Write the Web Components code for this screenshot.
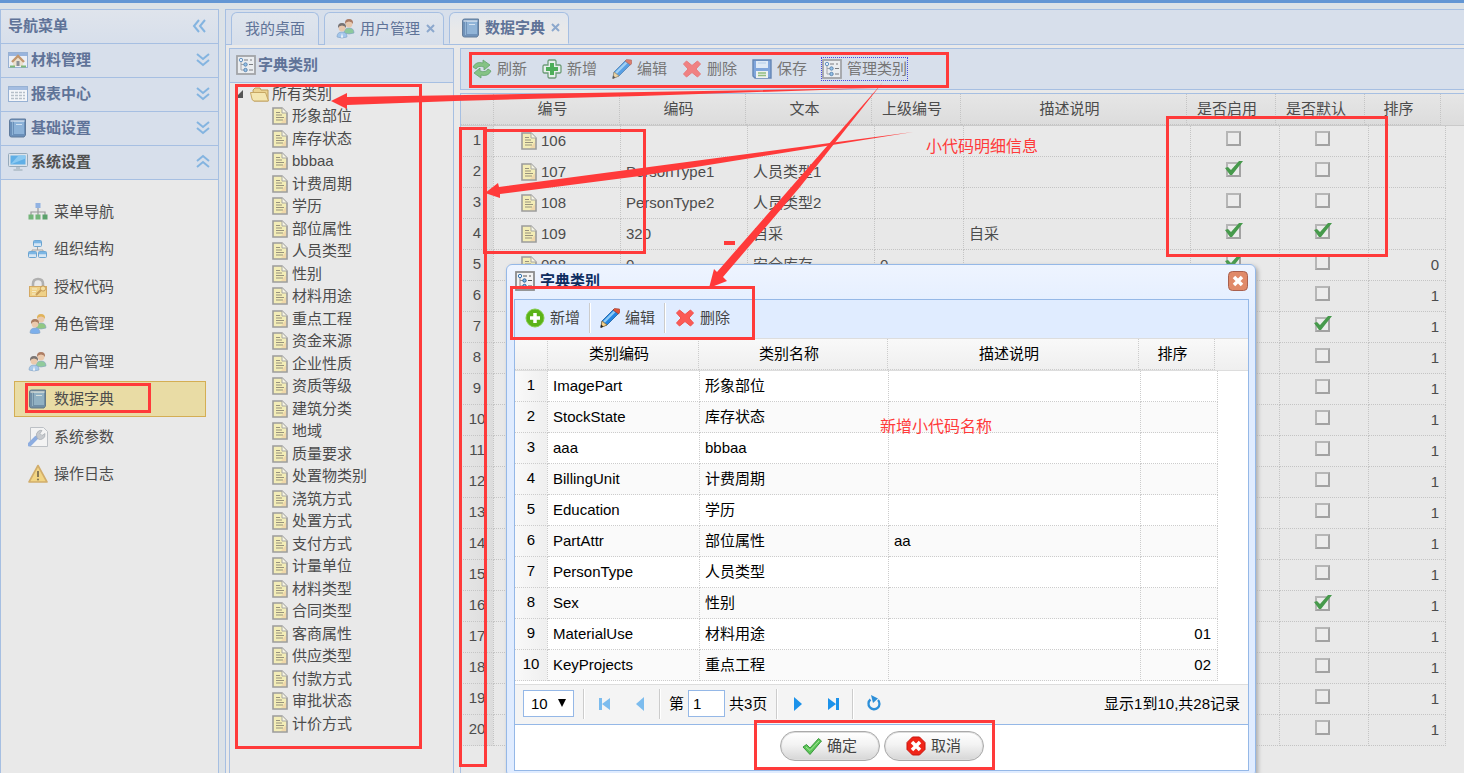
<!DOCTYPE html>
<html lang="zh-CN">
<head>
<meta charset="utf-8">
<title>数据字典</title>
<style>
html,body{height:100%;margin:0}
body{overflow:hidden;background:#dce2e7;font:15px/20px "Liberation Sans","Noto Sans CJK SC",sans-serif;color:#4c4c4c;
 --line:#a6bfe2;--head:#d7dfeb;--page:#e9e9e9;--red:#ff3a3a}
</style>
</head>
<body>
<app-shell></app-shell>
<script>
const esc = s => s == null ? '' : String(s);
class Base extends HTMLElement {
  constructor(){ super(); this.attachShadow({mode:'open'}); }
  connectedCallback(){ this.paint(); }
  paint(){ this.shadowRoot.innerHTML = `<style>*{box-sizing:border-box}${this.css()}</style>${this.html()}`; }
}

/* ---------- icons, on a 20 x 20 board unless BOARDS says otherwise ---------- */
const person = (x,y,hair,shirt) => `<path d="M${x-5} ${y+10}q0-5 5-5t5 5q-5 2-10 0z" fill="${shirt}" stroke="#5b87b5" stroke-width=".6"/><circle cx="${x}" cy="${y+1}" r="3.4" fill="#edbd95"/><path d="M${x-4} ${y+1}q-.5-5 4-5t4 5q-1-2.500-4-2.500t-4 2.500z" fill="${hair}"/>`;
const BOARDS = {doc:'0 0 16 18'};
const ICONS = {
  home:`<rect x="0.500" y="2.500" width="19" height="15" fill="#f4f7fb" stroke="#7d9ec9"/><rect x="1" y="3" width="18" height="3" fill="#7ea3d8"/><path d="M5 11v5h10v-5l-5-4z" fill="#f4e3c3"/><path d="M4 12l6-6 6 6" fill="none" stroke="#b9783a" stroke-width="2.400"/><rect x="8.500" y="11" width="3" height="5" fill="#6a6f76"/><path d="M2 16.500h5M13 16.500h5" stroke="#59a848" stroke-width="2"/>`,
  sheet:`<rect x=".5" y="2.500" width="19" height="15" fill="#fff" stroke="#7d9ec9"/><rect x="1" y="3" width="18" height="3" fill="#8fb0dd"/><path d="M3 8.500h14M3 11.500h14M3 14.500h14" stroke="#a9b2bc" stroke-width="1.500" stroke-dasharray="3 1"/>`,
  book:`<path d="M3.500 1h14v16l-1.500 2H3.500Q1.500 19 1.500 17V3Q1.500 1 3.500 1z" fill="#3d6ea5" stroke="#2e527c"/><path d="M6 3h10v13H6z" fill="#6d9fd0"/><path d="M2.500 3h14" stroke="#e6eef7" stroke-width="1.200"/><path d="M4.500 4v13" stroke="#6f9fcc"/><path d="M8 6.500h6" stroke="#cfe2f5"/>`,
  monitor:`<rect x=".5" y="1.500" width="19" height="13" rx="1" fill="#dfe6ea" stroke="#7b95a8"/><rect x="2.500" y="3.500" width="15" height="9" fill="#2f9be4"/><path d="M2.500 12.500l8-9h7v3z" fill="#6cc0f4"/><path d="M8 15h4v2h2.500v2h-9v-2H8z" fill="#a9b8c2"/>`,
  menu:`<path d="M10 5v5M3 13v-3h14v3M10 10v3" fill="none" stroke="#777" stroke-width="1.200"/><rect x="7.500" y="1" width="5" height="5" fill="#6c9be0"/><rect x=".5" y="12.500" width="5" height="5" fill="#42a04a"/><rect x="7.500" y="12.500" width="5" height="5" fill="#42a04a"/><rect x="14.500" y="12.500" width="5" height="5" fill="#1f8436"/>`,
  org:`<path d="M9.500 7v4M4 13v-2h11v2" fill="none" stroke="#888"/><g fill="#cfe5f8" stroke="#3787c6"><rect x="5.500" y="1.500" width="8" height="6" rx="1"/><rect x=".5" y="12.500" width="8" height="6" rx="1"/><rect x="10.500" y="12.500" width="8" height="6" rx="1"/></g><path d="M6 3h7M1 14h7M11 14h7" stroke="#4da1e2" stroke-width="2.500"/>`,
  lock:`<path d="M5 10V7q0-5 5-5t5 5v3" fill="none" stroke="#999" stroke-width="2.600"/><rect x="1.500" y="9.500" width="17" height="10" fill="#f2c860" stroke="#cc8f2c"/><path d="M4 12h5M4 14.500h4M4 17h5" stroke="#fbeebd"/><path d="M8 18l6-6" stroke="#b97d1e" stroke-width="2"/><circle cx="15" cy="11.500" r="2.600" fill="#fbdc82" stroke="#b97d1e"/>`,
  roles: person(13,4,'#dd9d1f','#6dbb58')+person(7,9,'#8f4f25','#4f97ec'),
  users: person(13,4,'#95512d','#6dbf7c')+person(6,8,'#4c4340','#8dbcec')+`<path d="M6 14l1 4-1 1-1-1z" fill="#fff"/>`,
  wrench:`<path d="M2.500 .5h13l4 4v15h-17z" fill="#f8f8f8" stroke="#aab0b6"/><path d="M1.500 17.500l7-7" stroke="#6794dd" stroke-width="4" stroke-linecap="round"/><path d="M9 10.500q-2-4 1.500-6.500 1.500-1 3.500-.5l-2 3 2 2 3-2q.5 4-2.500 5.500-2.500 1-4 .2z" fill="#b9bec4" stroke="#8b9299" stroke-width=".7"/>`,
  warn:`<path d="M10 1.500L19 18H1z" fill="#f6cd5a" stroke="#c89436" stroke-width="1.600" stroke-linejoin="round"/><path d="M10 7v6" stroke="#614b18" stroke-width="2"/><circle cx="10" cy="15.500" r="1.100" fill="#614b18"/>`,
  category:`<rect x="1" y="1" width="18" height="18" fill="#f3f3f3" stroke="#8c8c8c" stroke-width="1.800"/><path d="M5 5v10h4M5 9.500h4" fill="none" stroke="#8b8b8b"/><path d="M8 5h4M13 9.500h4M13 15h4M14 5h2" stroke="#555"/><circle cx="5" cy="5" r="1.700" fill="#eaf4ff" stroke="#3774b0"/><circle cx="9.500" cy="9.500" r="1.700" fill="#7ab7e8" stroke="#2d6499"/><circle cx="9.500" cy="15" r="1.700" fill="#7ab7e8" stroke="#2d6499"/>`,
  folder:`<path d="M3 6l2-2h5l1 2h7v11H4z" fill="#eccb6c" stroke="#a97d22"/><path d="M.5 8.500h15l3 8.500H4q-2 0-2.500-4z" fill="#fae69a" stroke="#b98c2c"/>`,
  doc:`<path d="M1 1h9l5 5v11H1z" fill="#f8f0a2" stroke="#7c7c7c" stroke-width="1.600"/><path d="M10 1v5h5" fill="#fdfbe0" stroke="#8d8d88"/><path d="M4 5.500h4M4 8h6M4 10.500h8M4 13h7" stroke="#776f50" stroke-width="1.200"/><path d="M9 16h5v-6z" fill="#f0bd84" opacity=".6"/>`,
  refresh:`<g fill="#63b85a" stroke="#358a3a" stroke-width=".8"><path d="M1 8q3-6 10-4V1l7 5-6 5V8q-6-2-8 2z"/><path d="M19 12q-3 6-10 4v3l-7-5 6-5v3q6 2 8-2z"/></g>`,
  add:`<path d="M7 1h6l1 1v4h4l1 1v6l-1 1h-4v4l-1 1H7l-1-1v-4H2l-1-1V7l1-1h4V2z" fill="#eff7ed" stroke="#418048" stroke-width="1.300"/><path d="M8 4h4v4h4v4h-4v4H8v-4H4V8h4z" fill="#149a1c"/>`,
  pencil:`<path d="M2 13L14 1l5 4L7 17l-6 2z" fill="#2384e2" stroke="#1c5d9d" stroke-width=".8"/><path d="M4 14L14.500 3.500" stroke="#8dcaf6" stroke-width="2.400"/><path d="M13 2l1.500-1.500 5 .5.500 3-1.500 2z" fill="#df5439" stroke="#9b3529" stroke-width=".6"/><path d="M2 13l5 4-6 2.500z" fill="#f7d28b" stroke="#8a6a34" stroke-width=".7"/><path d="M1 16.500l2.500 2L.5 20z" fill="#222"/>`,
  cross:`<path d="M4.500 2L10 6.500 15.500 2 18.500 5 14 10l4.500 5-3 3L10 13.500 4.500 18l-3-3L6 10 1.500 5z" fill="#fb5a56" stroke="#f0504c" stroke-width="1" stroke-linejoin="round"/>`,
  save:`<path d="M1 1h18v18H3l-2-2z" fill="#5c8fd6" stroke="#36619e" stroke-width="1.400"/><path d="M4 2h12v7H4z" fill="#e3f0fc"/><path d="M4 12h12v7H4z" fill="#f8faf2"/><path d="M6 14h8M6 16.500h8" stroke="#74b054" stroke-width="1.400"/><path d="M6 4h8" stroke="#a6c6ea"/>`,
  plus:`<circle cx="10" cy="10" r="9" fill="#5bb318" stroke="#84cc4a"/><path d="M10 5v10M5 10h10" stroke="#fff" stroke-width="3.500"/>`,
  ok:`<path d="M1 11l3.500-2.500L8 12 16.500 2.500 19.500 5 8 18.500z" fill="#5cc558" stroke="#2f8f31" stroke-width=".9"/><path d="M4 11l4 3.500L17 5" fill="none" stroke="#a4e795"/>`,
  stop:`<path d="M6.500 1h7L19 6.500v7L13.500 19h-7L1 13.500v-7z" fill="#f02418" stroke="#c7150d"/><path d="M6 6l8 8M14 6l-8 8" stroke="#fff" stroke-width="3.500"/>`,
  close:`<rect x=".5" y=".5" width="19" height="19" rx="4" fill="#e08a69" stroke="#a9604e"/><path d="M6 6l8 8M14 6l-8 8" stroke="#fff" stroke-width="3.500"/>`,
  down:`<path d="M4 4l6 5 6-5M4 10l6 5 6-5" fill="none" stroke="#84b4e0" stroke-width="2"/>`,
  up:`<path d="M4 9l6-5 6 5M4 15l6-5 6 5" fill="none" stroke="#84b4e0" stroke-width="2"/>`,
  left:`<path d="M9 4l-5 6 5 6M15 4l-5 6 5 6" fill="none" stroke="#84b4e0" stroke-width="2"/>`,
  first:`<path d="M4 4h3v12H4zM15 4v12L7 10z" fill="#7cbcee"/>`,
  prev:`<path d="M14 3v14L6 10z" fill="#7cbcee"/>`,
  next:`<path d="M6 3v14l8-7z" fill="#1c92ea"/>`,
  last:`<path d="M13 4h3v12h-3zM5 4v12l8-6z" fill="#1c92ea"/>`,
  reload:`<path d="M6.500 5.500a5.500 5.500 0 1 0 7.500 0.500" fill="none" stroke="#2d8fd8" stroke-width="2.300"/><path d="M7 1l7 3.500-5 4.500z" fill="#2d8fd8"/>`
};
customElements.define('ui-icon', class extends Base {
  css(){ return `:host{display:block;flex:none;width:20px;height:20px}:host([muted]){opacity:.7}svg{display:block;width:100%;height:100%}`; }
  html(){ const n=this.getAttribute('name'); return `<svg viewBox="${BOARDS[n]||'0 0 20 20'}" aria-hidden="true">${ICONS[n]}</svg>`; }
});

/* ---------- left navigation ---------- */
customElements.define('nav-section', class extends Base {
  css(){ return `:host{display:block}button{display:flex;align-items:center;gap:3px;width:100%;height:34px;padding:0 5px 2px 7px;border:0;border-bottom:1px solid var(--line);background:var(--head);font:inherit;font-weight:bold;color:#5f7398;text-align:left}
   :host([open]) button{color:#505050}span{flex:1}`; }
  html(){ return `<button aria-expanded="${this.hasAttribute('open')}"><ui-icon muted name="${this.getAttribute('icon')}"></ui-icon><span><slot></slot></span><ui-icon name="${this.hasAttribute('open')?'up':'down'}"></ui-icon></button>`; }
});
customElements.define('nav-link', class extends Base {
  css(){ return `:host{display:block}a{display:flex;align-items:center;gap:6px;height:36px;padding:0 13px;border:1px solid transparent;color:inherit;text-decoration:none}
   :host([selected]) a{background:#e9dca5;border-color:#d4ae54}`; }
  html(){ return `<a href="#"><ui-icon muted name="${this.getAttribute('icon')}"></ui-icon><slot></slot></a>`; }
});
customElements.define('nav-panel', class extends Base {
  css(){ return `:host{display:flex;flex-direction:column;width:219px;flex:none;border:1px solid var(--line);border-bottom:0;background:var(--page)}
   header{display:flex;align-items:center;height:34px;flex:none;padding:0 8px 2px 7px;border-bottom:1px solid var(--line);background:linear-gradient(#dfe4ec,var(--head));font-weight:bold;color:#5f7398}header span{flex:1}
   nav{display:flex;flex-direction:column;justify-content:space-between;height:298px;margin:14px 12px 0 13px}`; }
  html(){ const items=[['menu','菜单导航'],['org','组织结构'],['lock','授权代码'],['roles','角色管理'],['users','用户管理'],['book','数据字典'],['wrench','系统参数'],['warn','操作日志']];
   return `<header><span>导航菜单</span><ui-icon name="left"></ui-icon></header>
   <nav-section icon="home">材料管理</nav-section><nav-section icon="sheet">报表中心</nav-section><nav-section icon="book">基础设置</nav-section><nav-section icon="monitor" open>系统设置</nav-section>
   <nav>${items.map(i=>`<nav-link icon="${i[0]}" ${i[1]==='数据字典'?'selected':''}>${i[1]}</nav-link>`).join('')}</nav>`; }
});

/* ---------- tabs ---------- */
customElements.define('tab-item', class extends Base {
  css(){ return `:host{display:flex;align-items:center;height:33px;padding:0 13px;border:1px solid var(--line);border-bottom:0;border-radius:6px 6px 0 0;background:linear-gradient(#dfe5ed,var(--head));color:#5f7398}
   :host([icon]){padding:0 8px 0 11px}:host([selected]){background:linear-gradient(#e0e6ee,var(--page) 60%);font-weight:bold;height:33px;padding-bottom:1px;border-bottom:1px solid var(--page);box-sizing:content-box;height:32px}
   ui-icon{margin-right:4px}button{border:0;padding:0;margin-left:5px;background:none;width:10px;height:20px}svg{display:block}`; }
  html(){ const i=this.getAttribute('icon');
   return `${i?`<ui-icon muted name="${i}"></ui-icon>`:''}<slot></slot>${i?`<button aria-label="关闭"><svg width="10" height="20"><path d="M2 6l7 7M9 6l-7 7" stroke="#8ca8cd" stroke-width="2"/></svg></button>`:''}`; }
});
customElements.define('tab-bar', class extends Base {
  css(){ return `:host{display:flex;align-items:flex-start;gap:5px;height:35px;flex:none;padding:2px 5px 0;border-bottom:1px solid var(--line);background:var(--head)}`; }
  html(){ return `<tab-item>我的桌面</tab-item><tab-item icon="users">用户管理</tab-item><tab-item icon="book" selected>数据字典</tab-item>`; }
});

/* ---------- category tree ---------- */
customElements.define('category-tree', class extends Base {
  css(){ return `:host{display:flex;flex-direction:column;width:225px;flex:none;border:1px solid var(--line);border-bottom:0}
   header{display:flex;align-items:center;gap:2px;height:34px;flex:none;padding:0 6px 2px;border-bottom:1px solid var(--line);background:var(--head);font-weight:bold;color:#5f7398}
   ul{list-style:none;margin:0;padding:0}.root{display:flex;align-items:center;gap:2px;height:22px;padding-left:5px}.root svg{margin-right:5px}
   ul ul{display:grid;grid-auto-rows:1fr;height:630px;padding-left:42px}ul ul li{display:flex;align-items:center;gap:4px}
   li ui-icon.leaf{width:16px;height:18px}`; }
  html(){ const n='形象部位 库存状态 bbbaa 计费周期 学历 部位属性 人员类型 性别 材料用途 重点工程 资金来源 企业性质 资质等级 建筑分类 地域 质量要求 处置物类别 浇筑方式 处置方式 支付方式 计量单位 材料类型 合同类型 客商属性 供应类型 付款方式 审批状态 计价方式'.split(' ');
   return `<header><ui-icon muted name="category"></ui-icon>字典类别</header><ul role="tree"><li role="treeitem" aria-expanded="true"><div class="root"><svg width="8" height="8"><path d="M8 0v8H0z" fill="#555"/></svg><ui-icon muted name="folder"></ui-icon>所有类别</div>
   <ul role="group">${n.map(t=>`<li role="treeitem"><ui-icon class="leaf" muted name="doc"></ui-icon>${t}</li>`).join('')}</ul></li></ul>`; }
});

/* ---------- toolbars ---------- */
customElements.define('tool-button', class extends Base {
  css(){ return `:host{display:block}button{display:flex;align-items:center;gap:5px;height:22px;padding:0;border:0;background:none;font:inherit;color:inherit;white-space:nowrap}
   :host([focused]) button{outline:1px dotted #4a4ae0}`; }
  html(){ return `<button><ui-icon ${this.hasAttribute('muted')?'muted':''} name="${this.getAttribute('icon')}"></ui-icon><slot></slot></button>`; }
});
customElements.define('tool-bar', class extends Base {
  css(){ return `:host{display:flex;align-items:center;gap:15px;height:42px;flex:none;padding:0 11px;border:1px solid var(--line);border-right:0;background:var(--head);color:#767676}`; }
  html(){ return `<slot></slot>`; }
});

/* ---------- data grid: header table over body table ---------- */
const codes={cols:['编号','编码','文本','上级编号','描述说明','是否启用','是否默认','排序'],kinds:['doc','','','','','check','check','num'],
 headW:[33,126,126,126,89,226,89,89,76],bodyW:[33,127,127,127,89,227,89,89,77],
 rows:[['106','','','','',0,0,''],['107','PersonType1','人员类型1','','',1,0,''],['108','PersonType2','人员类型2','','',0,0,''],['109','320','自采','','自采',1,1,''],['098','0','安全库存','0','',1,0,'0'],
 ...Array.from({length:15},(_,i)=>['','','','','',null,(i===1||i===10)?1:0,'1'])]};
const cats={cols:['类别编码','类别名称','描述说明','排序'],kinds:['','','','num'],headW:[33,151,189,251,76],bodyW:[33,152,189,252,77],
 rows:[['ImagePart','形象部位'],['StockState','库存状态'],['aaa','bbbaa'],['BillingUnit','计费周期'],['Education','学历'],['PartAttr','部位属性','aa'],['PersonType','人员类型'],['Sex','性别'],['MaterialUse','材料用途','','01'],['KeyProjects','重点工程','','02']]};
const MODELS={codes,cats};
customElements.define('data-grid', class extends Base {
  css(){ return `:host{display:block}
   table{border-collapse:separate;border-spacing:0;table-layout:fixed;width:0}
   th,td{height:31px;padding:0 6px 0 5px;border:0 dotted var(--dot,#c4c4c4);border-width:0 1px 1px 0;white-space:nowrap;text-align:left;font-weight:normal;line-height:20px}
   td,tbody th{padding-bottom:var(--lift,1px)}
   .head{background:linear-gradient(var(--h1,#e6e6e6),var(--h2,#dcdcdc));border-bottom:1px solid var(--rule,#cacaca)}
   thead th{text-align:center;padding:0 13px 0 5px}
   tbody tr:nth-child(even){background:var(--zebra,#e8e8e8)}
   tbody th{padding:0 0 2px;text-align:center;background:linear-gradient(90deg,var(--h1,#e6e6e6),var(--h2,#dcdcdc))}
   .r{text-align:right}.c{text-align:center}.n{display:flex;align-items:center;gap:4px;padding-left:22px}.n ui-icon{width:16px;height:18px}
   .box{display:inline-block;position:relative;width:15px;height:15px;vertical-align:top;margin:0 2px 0 0}
   input{appearance:none;display:block;width:15px;height:15px;margin:0;border:2px solid #b6b6b6;border-right-color:#a2a2a2;border-bottom-color:#a2a2a2;background:#ececec}
   .box svg{position:absolute;left:-2px;top:-2px}`; }
  html(){ const m=MODELS[this.getAttribute('model')];
   const cell=(v,k,i)=> k==='check'? `<td class="c">${v==null?'':`<span class="box"><input type="checkbox" aria-label="${m.cols[i]}" ${v?'checked':''}>${v?`<svg width="20" height="16"><path d="M1 8l3-1 3 3L15 1h4L8 15H6z" fill="#479a4c"/></svg>`:''}</span>`}</td>`
     : k==='num'? `<td class="r">${esc(v)}</td>`
     : k==='doc'? `<td>${v?`<div class="n"><ui-icon muted name="doc"></ui-icon>${v}</div>`:''}</td>` : `<td>${esc(v)}</td>`;
   const cg=w=>`<colgroup>${w.map(x=>`<col style="width:${x}px">`).join('')}</colgroup>`;
   return `<div class="head"><table>${cg(m.headW)}<thead><tr><th></th>${m.cols.map(c=>`<th scope="col">${c}</th>`).join('')}</tr></thead></table></div>
   <table>${cg(m.bodyW)}<tbody>${m.rows.map((r,n)=>`<tr><th scope="row">${n+1}</th>${m.kinds.map((k,i)=>cell(r[i],k,i)).join('')}</tr>`).join('')}</tbody></table>`; }
});

/* ---------- pager ---------- */
customElements.define('pager-bar', class extends Base {
  css(){ return `:host{display:flex;align-items:center;height:40px;margin-top:3px;padding:0 8px 2px;border-top:1px solid #ddd;background:#f4f4f4}
   .size{position:relative;margin-right:9px}.size svg{position:absolute;right:8px;top:9px;pointer-events:none}
   select,input{appearance:none;height:27px;border:1px solid #95b8e7;border-radius:0;background:#fff;font:inherit;color:#000;margin:0}
   select{display:block;width:51px;padding:0 7px}input{width:37px;padding:0 4px}
   i{width:2px;height:30px;border-left:1px solid #ccc;border-right:1px solid #fff}
   button{display:block;border:0;padding:0;background:none;width:20px;height:20px}
   .g{display:flex;gap:15px;margin:0 9px 0 10px}label{display:flex;align-items:center;gap:4px;margin:0 9px 0 8px}p{margin:0 0 0 auto}`; }
  html(){ const b=(n,l)=>`<button aria-label="${l}"><ui-icon name="${n}"></ui-icon></button>`;
   return `<div class="size"><select aria-label="每页条数"><option>10</option></select><svg width="8" height="8" aria-hidden="true"><path d="M0 0h8L4 8z"/></svg></div><i></i>
   <div class="g">${b('first','首页')}${b('prev','上一页')}</div><i></i><label><span>第</span><input value="1"><span>共3页</span></label><i></i>
   <div class="g">${b('next','下一页')}${b('last','末页')}</div><i></i><div class="g">${b('reload','刷新')}</div><p>显示1到10,共28记录</p>`; }
});

/* ---------- dialog ---------- */
customElements.define('category-dialog', class extends Base {
  css(){ return `:host{position:absolute;left:506px;top:264px;width:750px;box-sizing:border-box;padding:0 6px 5px 7px;border:1px solid #95b8e7;border-radius:6px;background:linear-gradient(#eef4ff,#e0ecff 60px);box-shadow:2px 2px 4px #aaa;color:#000}
   header{display:flex;align-items:center;gap:5px;height:34px;padding:0 1px 2px;font-weight:bold;color:#0e2d5f}header span{flex:1}
   button{border:0;padding:0;background:none;font:inherit}
   .body{border:1px solid #95b8e7;background:#fff}
   .tools{display:flex;align-items:center;height:39px;padding:0 0 2px 10px;background:#e0ecff;border-bottom:1px solid #ddd;color:#444}
   .tools i{width:2px;height:30px;margin:0 9px;border-left:1px solid #ccc;border-right:1px solid #fff}
   data-grid{--h1:#f9f9f9;--h2:#efefef;--dot:#ccc;--rule:#ddd;--zebra:#fafafa;--lift:0}
   footer{display:flex;justify-content:center;gap:4px;height:46px;padding-top:6px;border-top:1px solid #95b8e7}
   footer button{display:flex;align-items:center;justify-content:center;gap:5px;width:100px;height:30px;border:1px solid #aaa;border-radius:15px;background:linear-gradient(#fff,#f3f3f3 45%,#d6d6d6);box-shadow:inset 0 0 0 1px #ddd;color:#444}`; }
  html(){ return `<header><ui-icon name="category"></ui-icon><span>字典类别</span><button aria-label="关闭"><ui-icon name="close"></ui-icon></button></header>
   <div class="body"><div class="tools"><tool-button icon="plus">新增</tool-button><i></i><tool-button icon="pencil">编辑</tool-button><i></i><tool-button icon="cross">删除</tool-button></div>
   <data-grid model="cats"></data-grid><pager-bar></pager-bar>
   <footer><button><ui-icon name="ok"></ui-icon>确定</button><button><ui-icon name="stop"></ui-icon>取消</button></footer></div>`; }
});

/* ---------- red review marks, drawn over the page ---------- */
customElements.define('review-marks', class extends Base {
  css(){ return `:host{position:absolute;inset:0;pointer-events:none;color:var(--red);font-size:16px;line-height:20px}svg{display:block;width:100%;height:100%}
   b{position:absolute;border:3px solid var(--red)}path{fill:var(--red)}span{position:absolute;white-space:nowrap}`; }
  html(){ const boxes=[[25,383,151,413],[469,52,949,88],[235,84,422,749],[459,127,487,767],[483,129,646,254],[1166,116,1388,257],[510,286,755,340],[754,720,995,770]];
   return `<svg aria-hidden="true">
   <path d="M880 88L347 97V93L331 101L347 109V105L455 101L640 96z"/><path d="M913 132L499 187L498 183L485 193L500 198L500 194L640 176z"/>
   <path d="M883 82L717 272L714 269L709 288L727 281L723 277L800 187z"/><path d="M724 241h11v4h-11z"/></svg>
   ${boxes.map(([a,b,c,d])=>`<b style="left:${a}px;top:${b}px;width:${c-a}px;height:${d-b}px"></b>`).join('')}
   <span style="left:926px;top:137px">小代码明细信息</span><span style="left:880px;top:417px">新增小代码名称</span>`; }
});

/* ---------- shell ---------- */
customElements.define('app-shell', class extends Base {
  css(){ return `:host{display:flex;gap:6px;position:relative;height:100%;box-sizing:border-box;overflow:hidden;padding-top:9px;background:linear-gradient(#6396d4 3px,#dce2e7 3px)}
   main{flex:1;min-width:0;display:flex;flex-direction:column;border:1px solid var(--line);border-width:1px 0 0 1px;background:var(--page)}
   .content{flex:1;min-height:0;display:flex;gap:6px;padding:3px 0 0 3px}
   section{flex:1;min-width:0;display:flex;flex-direction:column;gap:3px}
   data-grid{flex:1;border:1px solid var(--line);border-width:1px 0 0 1px}`; }
  html(){ const t=[['refresh','刷新'],['add','新增'],['pencil','编辑'],['cross','删除'],['save','保存'],['category','管理类别']];
   return `<nav-panel></nav-panel><main><tab-bar></tab-bar><div class="content"><category-tree></category-tree><section>
   <tool-bar>${t.map((b,i)=>`<tool-button muted icon="${b[0]}" ${i===5?'focused':''}>${b[1]}</tool-button>`).join('')}</tool-bar><data-grid model="codes"></data-grid></section></div></main>
   <category-dialog></category-dialog><review-marks></review-marks>`; }
});
</script>
</body>
</html>
